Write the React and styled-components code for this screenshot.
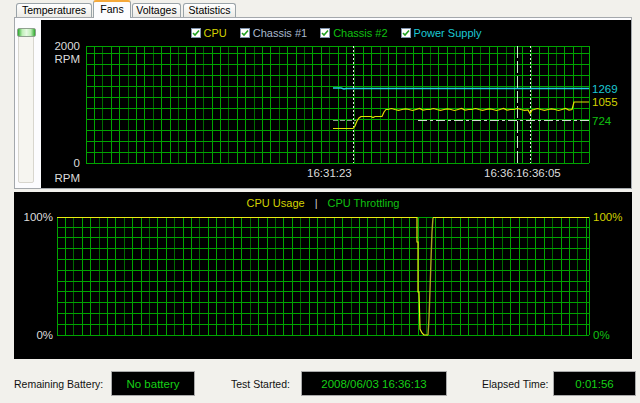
import React from 'react'
import styled, { createGlobalStyle } from 'styled-components'

const GlobalStyle = createGlobalStyle`
  html, body {
    margin: 0;
    padding: 0;
    background: #f2f1ec;
  }
  body {
    font-family: "Liberation Sans", Arial, sans-serif;
  }
`

const Window = styled.div`
  width: 640px;
  height: 403px;
  overflow: hidden;
  background: #f2f1ec;
  display: flex;
  flex-direction: column;
`

const TabStrip = styled.div`
  display: flex;
  align-items: flex-end;
  height: 17px;
  padding-left: 16px;
  gap: 1px;
  position: relative;
  z-index: 1;
`

const Tab = styled.div`
  box-sizing: border-box;
  width: ${p => p.$w}px;
  height: ${p => (p.$active ? 18 : 14)}px;
  margin-bottom: ${p => (p.$active ? -1 : 0)}px;
  margin-right: ${p => p.$mr || 0}px;
  border: 1px solid #9aa3a8;
  border-bottom: none;
  border-top: ${p => (p.$active ? '2px solid #f5a93a' : '1px solid #9aa3a8')};
  border-radius: 3px 3px 0 0;
  background: ${p => (p.$active ? '#fcfcfe' : 'linear-gradient(#ffffff, #ecebe6)')};
  font-size: 10.5px;
  line-height: ${p => (p.$active ? 14 : 12)}px;
  text-align: center;
  color: #000;
`

const TabPanel = styled.div`
  box-sizing: border-box;
  width: 618px;
  height: 172px;
  margin-left: 14px;
  padding-top: 2px;
  border: 1px solid #a4a8ac;
  background: #fcfcfe;
  display: flex;
`

const SliderColumn = styled.div`
  width: 26px;
  padding: 8px 0 0 3px;
  box-sizing: border-box;
`

const SliderTrack = styled.div`
  position: relative;
  box-sizing: border-box;
  width: 16px;
  height: 155px;
  border: 1px solid #d8d6ce;
  border-radius: 2px;
  background: #f6f5f0;
`

const SliderThumb = styled.div`
  position: absolute;
  top: -1px;
  left: -2px;
  width: 19px;
  height: 9px;
  box-sizing: border-box;
  border: 1px solid #8fa08f;
  border-radius: 2px;
  background: linear-gradient(90deg, #2ea82e, #bff0b8 25%, #e6f8e2 50%, #bff0b8 75%, #2ea82e);
`

const GraphPanel = styled.div`
  width: 590px;
  height: 168px;
  background: #000;
  display: flex;
  flex-direction: column;
`

const UsagePanel = styled.div`
  width: 618px;
  height: 167px;
  margin: 3px 0 0 14px;
  background: #000;
  display: flex;
  flex-direction: column;
`

const Legend = styled.div`
  box-sizing: border-box;
  height: ${p => p.$h}px;
  padding-top: ${p => p.$pt}px;
  display: flex;
  align-items: center;
  justify-content: center;
  gap: ${p => p.$gap}px;
  font-size: 11px;
  line-height: 12px;
`

const LegendItem = styled.span`
  display: flex;
  align-items: center;
  gap: 3px;
  color: ${p => p.$color};
`

const Check = styled.span`
  box-sizing: border-box;
  width: 10px;
  height: 10px;
  border: 1px solid #7f93ad;
  background: #fff;
  display: flex;
  align-items: center;
  justify-content: center;
`

const Separator = styled.span`
  color: #d0d0d0;
`

const Chart = styled.svg`
  display: block;
  font-family: "Liberation Sans", Arial, sans-serif;
  font-size: 11.5px;
`

const StatusBar = styled.div`
  box-sizing: border-box;
  height: 44px;
  padding: 5px 0 0 14px;
  display: flex;
  align-items: center;
`

const Field = styled.div`
  display: flex;
  align-items: center;
  margin-right: ${p => p.$mr || 0}px;
`

const FieldLabel = styled.span`
  width: ${p => p.$w}px;
  font-size: 10.5px;
  color: #111;
  white-space: nowrap;
`

const FieldValue = styled.div`
  box-sizing: border-box;
  width: ${p => p.$w}px;
  height: 25px;
  border: 1px solid #a9a9a9;
  background: #000;
  color: #16d016;
  font-size: 11.5px;
  display: flex;
  align-items: center;
  justify-content: center;
  white-space: nowrap;
`

const CheckMark = () => (
  <svg width="8" height="8" viewBox="0 0 8 8">
    <path d="M1 4 L3 6 L7 1.5" stroke="#21a121" strokeWidth="1.6" fill="none" />
  </svg>
)

const Grid = ({ left, right, top, bottom, dx, dy }) => {
  const lines = []
  for (let i = 0, x = left; x < right - 1; i++, x = left + i * dx) {
    lines.push(
      <line key={'v' + i} x1={x} x2={x} y1={top} y2={bottom}
        stroke={i % 3 === 2 ? '#006a00' : '#00a400'} strokeWidth="1" />
    )
  }
  for (let k = 0, y = bottom; y > top + 2; k++, y = bottom - k * dy) {
    lines.push(
      <line key={'h' + k} x1={left} x2={right} y1={y} y2={y} stroke="#00a400" strokeWidth="1" />
    )
  }
  lines.push(<line key="t" x1={left} x2={right} y1={top} y2={top} stroke="#00a400" />)
  lines.push(<line key="r" x1={right} x2={right} y1={top} y2={bottom} stroke="#00a400" />)
  return <g shapeRendering="crispEdges">{lines}</g>
}

const wiggle = (x0, x1, y, step) => {
  const pts = []
  const pattern = [0, -1, 0, 0.8, 0, -0.6, 0, 1, 0, -1, 0.6, 0]
  for (let i = 0, x = x0; x <= x1; i++, x += step) {
    pts.push(`${x},${y + pattern[i % pattern.length]}`)
  }
  return pts.join(' ')
}

const cpuFan = [
  '292,90.5', '312,90.5', '314,88', '316,83', '318,80', '320,78.5', '330,78.5', '332,79.5', '334,78.5',
  '341,78.5', '343,74', '345,71.5',
  wiggle(347, 484, 71.5, 3.5),
  '487,72', '489,75.5', '491,72',
  wiggle(493, 529, 71.5, 3.5),
  '531,71.5', '533,64', '548,64',
].join(' ')

const usage = '43,9.5 403,9.5 403,34 404,34 404,84 405,84 406,121 408,125 410,127 414,127'
const recovery = '414,127 415,110 416,82 417,52 418,24 419,9.5'

const labelFill = '#dcdcdc'

export default function App() {
  return (
    <>
      <GlobalStyle />
      <Window>
        <TabStrip>
          <Tab $w={76}>Temperatures</Tab>
          <Tab $w={38} $active>Fans</Tab>
          <Tab $w={49} $mr={1}>Voltages</Tab>
          <Tab $w={53}>Statistics</Tab>
        </TabStrip>

        <TabPanel>
          <SliderColumn>
            <SliderTrack>
              <SliderThumb />
            </SliderTrack>
          </SliderColumn>

          <GraphPanel>
            <Legend $h={18} $pt={7} $gap={13}>
              <LegendItem $color="#d2d200"><Check><CheckMark /></Check>CPU</LegendItem>
              <LegendItem $color="#a9b9cc"><Check><CheckMark /></Check>Chassis #1</LegendItem>
              <LegendItem $color="#10c010"><Check><CheckMark /></Check>Chassis #2</LegendItem>
              <LegendItem $color="#1cc8d4"><Check><CheckMark /></Check>Power Supply</LegendItem>
            </Legend>
            <Chart width="590" height="150">
              <Grid left={45} right={548} top={8} bottom={125} dx={8.4} dy={11} />
              <g fill={labelFill} textAnchor="end" dominantBaseline="central">
                <text x="39" y="8">2000</text>
                <text x="39" y="21">RPM</text>
                <text x="39" y="125">0</text>
                <text x="39" y="140">RPM</text>
              </g>
              <g stroke="#e8e8e8" strokeWidth="1" strokeDasharray="2 2" shapeRendering="crispEdges">
                <line x1="312.5" x2="312.5" y1="8" y2="125" />
                <line x1="489.5" x2="489.5" y1="8" y2="125" />
              </g>
              <line x1="476.5" x2="476.5" y1="8" y2="125" stroke="#c8f0c8" strokeDasharray="12 3" />
              <polyline points="292,50 300,50 303,51 305,50.5 548,50.5" fill="none" stroke="#22d0e0" strokeWidth="1.4" />
              <line x1="292" x2="315" y1="82.5" y2="82.5" stroke="#8a9a8a" strokeDasharray="5 2" />
              <line x1="377" x2="548" y1="82.5" y2="82.5" stroke="#d0e0d0" strokeDasharray="9 3 3 3" />
              <polyline points={cpuFan} fill="none" stroke="#e0e000" strokeWidth="1.2" />
              <g dominantBaseline="central">
                <text x="551" y="51" fill="#1cc8d4">1269</text>
                <text x="551" y="64" fill="#d2d200">1055</text>
                <text x="551" y="83" fill="#10c010">724</text>
              </g>
              <g fill={labelFill} dominantBaseline="central">
                <text x="266" y="135">16:31:23</text>
                <text x="443" y="135">16:36:16:36:05</text>
              </g>
            </Chart>
          </GraphPanel>
        </TabPanel>

        <UsagePanel>
          <Legend $h={16} $pt={6} $gap={10}>
            <LegendItem $color="#d2d200">CPU Usage</LegendItem>
            <Separator>|</Separator>
            <LegendItem $color="#10c010">CPU Throttling</LegendItem>
          </Legend>
          <Chart width="618" height="144">
            <Grid left={43} right={575} top={9} bottom={127} dx={8.4} dy={10.8} />
            <polyline points={usage} fill="none" stroke="#ecec10" strokeWidth="1.2" />
            <polyline points={recovery} fill="none" stroke="#a8a820" strokeWidth="1.4" />
            <line x1="419" x2="575" y1="9.5" y2="9.5" stroke="#ecec10" strokeWidth="1.2" />
            <g dominantBaseline="central">
              <text x="39" y="9" fill={labelFill} textAnchor="end">100%</text>
              <text x="39" y="127" fill={labelFill} textAnchor="end">0%</text>
              <text x="579" y="9" fill="#d2d200">100%</text>
              <text x="579" y="127" fill="#10c010">0%</text>
            </g>
          </Chart>
        </UsagePanel>

        <StatusBar>
          <Field $mr={36}>
            <FieldLabel $w={97}>Remaining Battery:</FieldLabel>
            <FieldValue $w={84}>No battery</FieldValue>
          </Field>
          <Field $mr={35}>
            <FieldLabel $w={70}>Test Started:</FieldLabel>
            <FieldValue $w={146}>2008/06/03 16:36:13</FieldValue>
          </Field>
          <Field>
            <FieldLabel $w={71}>Elapsed Time:</FieldLabel>
            <FieldValue $w={83}>0:01:56</FieldValue>
          </Field>
        </StatusBar>
      </Window>
    </>
  )
}
